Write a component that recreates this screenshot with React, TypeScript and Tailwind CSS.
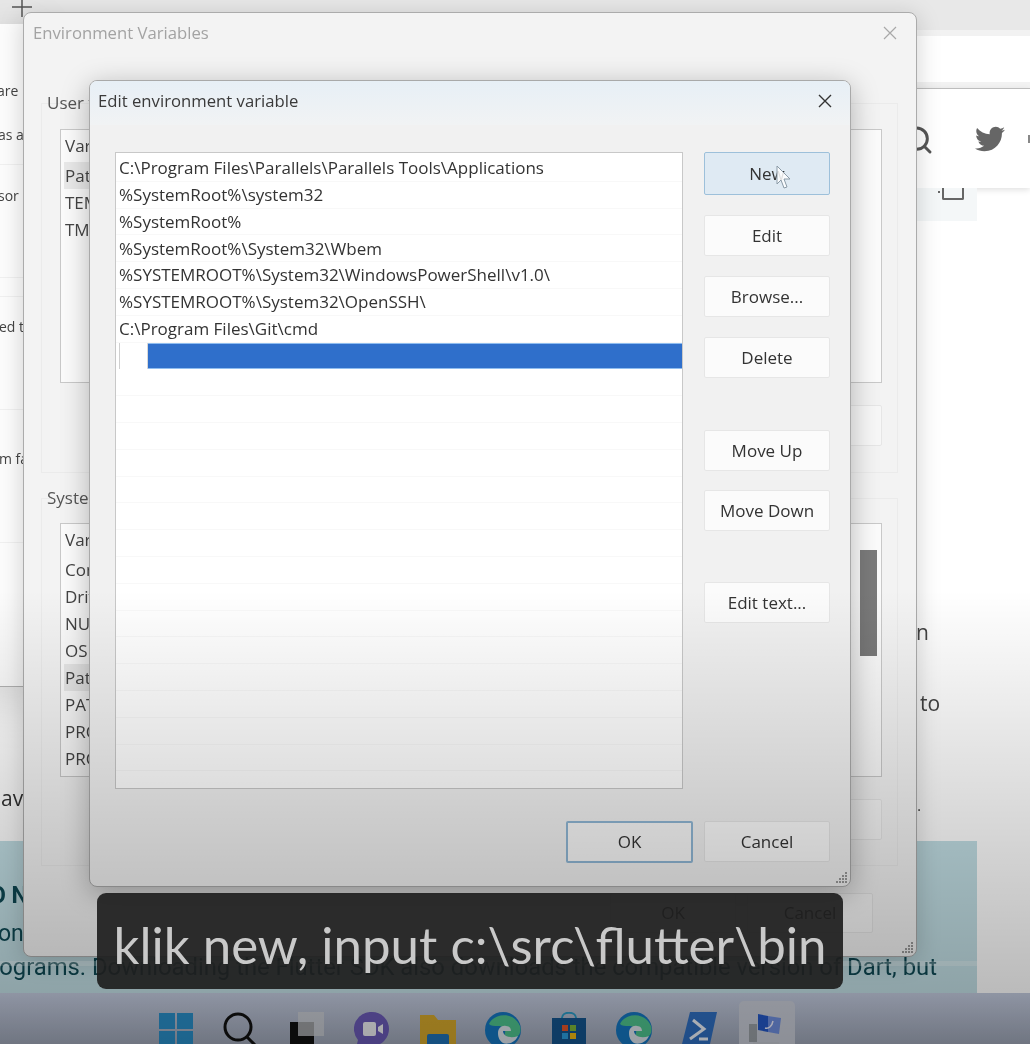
import { Search } from "lucide-react";
import { FaTwitter } from "react-icons/fa";

const paths = [
  "C:\\Program Files\\Parallels\\Parallels Tools\\Applications",
  "%SystemRoot%\\system32",
  "%SystemRoot%",
  "%SystemRoot%\\System32\\Wbem",
  "%SYSTEMROOT%\\System32\\WindowsPowerShell\\v1.0\\",
  "%SYSTEMROOT%\\System32\\OpenSSH\\",
  "C:\\Program Files\\Git\\cmd",
];

const emptyRows = Array.from({ length: 15 }, (_, i) => i);

function Btn({ children, className = "" }: { children: React.ReactNode; className?: string }) {
  return (
    <div
      className={`w-[126px] h-[41px] flex items-center justify-center text-[17px] text-[#333] bg-[#fbfbfb] border border-[#e6e6e6] rounded-[2px] shrink-0 ${className}`}
    >
      {children}
    </div>
  );
}

function VarList({ rows, selected, h, thumb }: { rows: string[]; selected: number; h: string; thumb?: boolean }) {
  return (
    <div className={`relative ml-[18px] w-[822px] ${h} bg-[#fbfbfb] border border-[#c9c9c9] overflow-hidden text-[17px] text-[#444]`}>
      <div className="h-[32px] pl-[4px] flex items-center">Variable</div>
      {rows.map((r, i) => (
        <div
          key={i}
          className={`h-[27px] w-[300px] ml-[3px] pl-[1px] flex items-center ${i === selected ? "bg-[#e9e9e9]" : ""}`}
        >
          {r}
        </div>
      ))}
      {thumb && <div className="absolute right-[4px] top-[26px] w-[17px] h-[106px] bg-[#7b7b7b]" />}
    </div>
  );
}

function Taskbar() {
  return (
    <div className="h-[51px] shrink-0 overflow-hidden flex pl-[143px] pt-[19px] bg-[linear-gradient(180deg,#c3cbdf_0%,#a0a8b9_100%)] relative">
      <div className="absolute left-[739px] top-[8px] w-[56px] h-[50px] rounded-[5px] bg-[#c9cdd8]" />
      {[
        <svg width="36" height="36" viewBox="0 0 36 36"><path fill="#2a8fc9" d="M1 1h16v16H1zM19 1h16v16H19zM1 19h16v16H1zM19 19h16v16H19z" /></svg>,
        <svg width="36" height="36" viewBox="0 0 36 36" fill="none" stroke="#111" strokeWidth="3"><circle cx="15" cy="15" r="13" /><path d="M24 25l10 10" /></svg>,
        <svg width="36" height="36" viewBox="0 0 36 36"><rect x="1" y="10" width="24" height="26" fill="#111" /><rect x="9" y="0" width="26" height="24" fill="#cfd2d6" fillOpacity="0.75" /></svg>,
        <svg width="36" height="36" viewBox="0 0 36 36"><path fill="#6b5bb8" d="M18 0a17 17 0 0 1 0 34H8l-6 2 2-8A17 17 0 0 1 18 0z" /><rect x="9" y="10" width="13" height="14" rx="2" fill="#f0f0f4" /><path d="M24 15l5-3v10l-5-3z" fill="#f0f0f4" /></svg>,
        <svg width="36" height="36" viewBox="0 0 36 36"><path fill="#d6a92c" d="M0 3h14l4 5h18v28H0z" /><rect x="7" y="22" width="22" height="14" rx="2" fill="#1f73b8" /></svg>,
        <svg width="36" height="36" viewBox="0 0 36 36"><circle cx="18" cy="18" r="18" fill="#1577c2" /><path fill="#4fc58f" d="M4 12C8 2 28-2 35 14c2 8-2 12-9 12-5 0-7-3-6-5 1-4-2-7-7-7-4 0-7 0-9-2z" /><path fill="#dfe6ee" d="M13 21c0-5 4-8 8-7 4 0 5 3 5 5h-8c0 5 7 8 15 5-3 7-11 9-15 7-3-2-5-5-5-10z" /></svg>,
        <svg width="36" height="36" viewBox="0 0 36 36"><path fill="none" stroke="#2a9cc7" strokeWidth="2" d="M11 6c0-7 14-7 14 0" /><path fill="#14558f" d="M1 6h34v28a2 2 0 0 1-2 2H3a2 2 0 0 1-2-2z" /><rect x="11" y="13" width="6" height="6" fill="#e8562a" /><rect x="19" y="13" width="6" height="6" fill="#7eb83a" /><rect x="11" y="21" width="6" height="6" fill="#2b9fe0" /><rect x="19" y="21" width="6" height="6" fill="#f2b90f" /></svg>,
        <svg width="36" height="36" viewBox="0 0 36 36"><circle cx="18" cy="18" r="18" fill="#1577c2" /><path fill="#4fc58f" d="M4 12C8 2 28-2 35 14c2 8-2 12-9 12-5 0-7-3-6-5 1-4-2-7-7-7-4 0-7 0-9-2z" /><path fill="#dfe6ee" d="M13 21c0-5 4-8 8-7 4 0 5 3 5 5h-8c0 5 7 8 15 5-3 7-11 9-15 7-3-2-5-5-5-10z" /></svg>,
        <svg width="36" height="36" viewBox="0 0 36 36"><path fill="#2f6fc2" d="M8 0h27l-7 32H0z" /><path fill="none" stroke="#eef3fb" strokeWidth="3" d="M11 8l11 9-14 10M17 27h9" /></svg>,
        <svg width="36" height="36" viewBox="0 0 36 36"><rect x="2" y="12" width="8" height="18" fill="#9aa0a6" /><path fill="#2458c7" d="M11 2l10 2v16l-10-2z" /><path fill="#6f8fe0" d="M21 4l13 2-2 16-11-2z" /><path fill="#c6cad2" d="M6 30h26v6H6z" /><path fill="none" stroke="#eef" strokeWidth="1.5" d="M18 16c4 1 7-2 8-7" /></svg>,
      ].map((icon, i) => (
        <div key={i} className="relative w-[65.5px] shrink-0 flex justify-center">{icon}</div>
      ))}
    </div>
  );
}

export default function App() {
  return (
    <div className="relative w-[1030px] h-[1044px] overflow-hidden bg-white blur-[0.5px] font-['Open_Sans','Noto_Sans',sans-serif]">
      {/* Browser page behind the windows */}
      <div className="w-full h-full flex flex-col">
        <div className="h-[30px] shrink-0 bg-[#e8e8e8] flex pl-[11px]">
          <svg width="22" height="22" viewBox="0 0 22 22" className="-mt-[3px]" fill="none" stroke="#555" strokeWidth="1.5"><path d="M11 0v20M1 10h20" /></svg>
        </div>
        <div className="h-[58px] shrink-0 bg-white border-y-[6px] border-[#f2f2f2]" />
        <div className="h-[100px] shrink-0 bg-white border-t border-[#bdbdbd] flex items-center justify-end shadow-[0_2px_6px_rgba(0,0,0,0.12)] relative">
          <Search size={32} strokeWidth={2.2} className="text-[#555] mr-[41px] mt-[2px]" />
          <FaTwitter size={30} className="text-[#666] mr-[23px]" />
          <div className="w-[2px] h-[8px] bg-[#888]" />
        </div>
        <div className="flex-1 relative flex flex-col min-h-0">
          <div className="ml-auto mr-[53px] w-[60px] h-[33px] bg-[#f4f7f8] flex justify-center gap-[2px] pl-[8px]">
            <div className="w-[2px] h-[2px] mt-[3px] bg-[#666]" />
            <div className="w-[22px] h-[12px] border-2 border-t-0 border-[#666] rounded-b-[2px]" />
          </div>
          <div className="h-[397px] shrink-0" />
          <div className="flex justify-end pr-[100px] h-[30px] text-[21px] text-[#444] items-center">
            <span className="w-[14px]">n</span>
          </div>
          <div className="h-[41px] shrink-0" />
          <div className="flex justify-end pr-[86px] h-[30px] text-[21px] text-[#444] items-center">
            <span className="w-[24px]">to</span>
          </div>
          <div className="h-[90px] shrink-0 flex items-end text-[21px] text-[#333] leading-none pl-[1px]">av</div>
          <div className="h-[10px] shrink-0 flex justify-end pr-[109px] text-[#333] text-[14px]">
            <span className="-mt-[14px]">.</span>
          </div>
          <div className="w-[977px] h-[152px] mt-auto bg-[#c2dfe5] overflow-hidden font-['Roboto',sans-serif] text-[#0f4a55]">
            <div className="h-[52px] -ml-[10px] pt-[43px] text-[23px] font-bold leading-none">O N</div>
            <div className="h-[36px] -ml-[2px] pt-[29px] text-[23px] leading-none">on</div>
            <div className="pt-[27px] -ml-[22px] text-[23.8px] leading-none whitespace-nowrap">
              programs. Downloading the Flutter SDK also downloads the compatible version of Dart, but
            </div>
          </div>
        </div>
        <Taskbar />
      </div>

      {/* Window at the far left */}
      <div className="absolute left-0 top-[24px] w-[23px] h-[663px] bg-[#fcfcfc] border-b border-[#b5b5b5] overflow-hidden shadow-[0_12px_50px_rgba(0,0,0,0.35)] flex flex-col text-[14px] leading-[20px] text-[#444] whitespace-nowrap">
        <div className="h-[77px] shrink-0 flex items-end -ml-[3px]">are</div>
        <div className="h-[24px] shrink-0" />
        <div className="h-[40px] shrink-0 -ml-[2px] border-b border-[#f0f0f0]">as a</div>
        <div className="h-[40px] shrink-0 pt-[21px] -ml-[2px]">sor :</div>
        <div className="h-[73px] shrink-0 border-b border-[#f0f0f0]" />
        <div className="h-[19px] shrink-0 border-b border-[#f0f0f0]" />
        <div className="h-[40px] shrink-0 pt-[20px] -ml-[1px]">ed t</div>
        <div className="h-[73px] shrink-0 border-b border-[#f0f0f0]" />
        <div className="h-[133px] shrink-0 pt-[39px] -ml-[1px] border-b border-[#f0f0f0]">m fa</div>
      </div>

      {/* Environment Variables window */}
      <div className="absolute left-[23px] top-[12px] w-[894px] h-[945px] rounded-[8px] bg-[#f3f3f3] border border-[#ababab] shadow-[0_4px_24px_rgba(0,0,0,0.18)] flex flex-col text-[#555]">
        <div className="h-[40px] shrink-0 pl-[9px] pr-[19px] flex items-center justify-between text-[16.7px] text-[#a3a3a3]">
          <span>Environment Variables</span>
          <svg width="14" height="14" viewBox="0 0 14 14" stroke="#a8a8a8" strokeWidth="1.2"><path d="M1 1l12 12M13 1L1 13" /></svg>
        </div>
        <div className="mt-[50px] ml-[17px] w-[857px] h-[370px] shrink-0 border border-[#ebebeb]">
          <div className="-mt-[13px] ml-[5px] h-[38px] text-[17px] text-[#555] leading-[24px]">User variables</div>
          <VarList rows={["Path", "TEMP", "TMP"]} selected={0} h="h-[254px]" />
          <div className="ml-[19px] w-[821px] mt-[22px] flex justify-end">
            <Btn className="!bg-[#f7f7f7]">Delete</Btn>
          </div>
        </div>
        <div className="mt-[25px] ml-[17px] w-[857px] h-[368px] shrink-0 border border-[#ebebeb]">
          <div className="-mt-[13px] ml-[5px] h-[37px] text-[17px] text-[#555] leading-[24px]">System variables</div>
          <VarList
            rows={["ComSpec", "DriverData", "NUMBER_OF_PROCESSORS", "OS", "Path", "PATHEXT", "PROCESSOR_ARCHITECTURE", "PROCESSOR_IDENTIFIER"]}
            selected={4}
            h="h-[254px]"
            thumb
          />
          <div className="ml-[19px] w-[821px] mt-[22px] flex justify-end">
            <Btn className="!bg-[#f7f7f7]">Delete</Btn>
          </div>
        </div>
        <div className="mt-[27px] pr-[43px] flex justify-end gap-[11px]">
          <Btn className="!bg-[#f7f7f7] !h-[40px]">OK</Btn>
          <Btn className="!bg-[#f7f7f7] !h-[40px]">Cancel</Btn>
        </div>
      </div>

      {/* Edit environment variable dialog */}
      <div className="absolute left-[89px] top-[80px] w-[762px] h-[807px] rounded-[8px] bg-[#f1f1f1] border border-[#a9a9a9] shadow-[0_6px_28px_rgba(0,0,0,0.28)] flex flex-col text-[#333] overflow-hidden">
        <div className="h-[44px] shrink-0 pl-[8px] pr-[18px] pb-[4px] flex items-center justify-between text-[16.7px] bg-[linear-gradient(180deg,#e7eff6_0%,#f1f3f4_100%)]">
          <span className="text-[#3a3a3a]">Edit environment variable</span>
          <svg width="14" height="14" viewBox="0 0 14 14" stroke="#333" strokeWidth="1.4"><path d="M1 1l12 12M13 1L1 13" /></svg>
        </div>
        <div className="flex gap-[21px] pl-[25px] pt-[27px]">
          <div className="w-[568px] h-[637px] bg-white border border-[#c8c8c8] pt-[2px] overflow-hidden text-[17px]">
            {paths.map((p) => (
              <div key={p} className="h-[26.8px] pl-[3px] flex items-center border-b border-[#f8f8f8] whitespace-nowrap">{p}</div>
            ))}
            <div className="h-[26.8px] flex bg-[#2f6fcb] border-y border-[#8fbdf0]">
              <div className="w-[32px] pl-[3px] bg-white border-r border-[#d8d8d8] -my-[1px]">
                <div className="h-full border-l border-[#cfcfcf]" />
              </div>
            </div>
            {emptyRows.map((i) => (
              <div key={i} className="h-[26.8px] border-b border-[#f8f8f8]" />
            ))}
          </div>
          <div className="flex flex-col">
            <Btn className="!h-[43px] !bg-[#dfeaf3] !border-[#9dc0da]">New</Btn>
            <Btn className="mt-[20px]">Edit</Btn>
            <Btn className="mt-[20px]">Browse...</Btn>
            <Btn className="mt-[20px]">Delete</Btn>
            <Btn className="mt-[52px]">Move Up</Btn>
            <Btn className="mt-[19px]">Move Down</Btn>
            <Btn className="mt-[51px]">Edit text...</Btn>
          </div>
        </div>
        <div className="flex justify-end gap-[11px] pr-[20px] mt-[32px]">
          <Btn className="!w-[127px] !h-[42px] !border-2 !border-[#8fb6d4] !bg-[#f8f8f8]">OK</Btn>
          <Btn>Cancel</Btn>
        </div>
        <svg width="14" height="14" viewBox="0 0 14 14" fill="#999" className="absolute right-[2px] bottom-[2px]">
          <path d="M11 2h2v2h-2zM8 5h2v2H8zM11 5h2v2h-2zM5 8h2v2H5zM8 8h2v2H8zM11 8h2v2h-2zM2 11h2v2H2zM5 11h2v2H5zM8 11h2v2H8zM11 11h2v2h-2z" />
        </svg>
      </div>

      {/* Mouse pointer */}
      <svg width="16" height="26" viewBox="0 0 16 26" className="absolute left-[776px] top-[165px]">
        <path d="M1 1v18l4-4 3 8 3-1-3-8h6z" fill="#fff" fillOpacity="0.85" stroke="#8a9aa6" strokeWidth="1" />
      </svg>

      {/* Resize grip on the outer window */}
      <svg width="14" height="14" viewBox="0 0 14 14" fill="#999" className="absolute left-[900px] top-[940px]">
        <path d="M11 2h2v2h-2zM8 5h2v2H8zM11 5h2v2h-2zM5 8h2v2H5zM8 8h2v2H8zM11 8h2v2h-2zM2 11h2v2H2zM5 11h2v2H5zM8 11h2v2H8zM11 11h2v2h-2z" />
      </svg>

      {/* Light strip of the video frame */}
      <div className="absolute left-0 top-[961px] w-full h-[5px] bg-white/25" />

      {/* Video darkening */}
      <div className="absolute left-0 right-0 top-[590px] bottom-0 bg-[linear-gradient(180deg,rgba(0,0,0,0)_0%,rgba(0,0,0,0.3)_100%)]" />

      {/* Caption */}
      <div className="absolute left-[97px] top-[893px] w-[746px] h-[96px] rounded-[9px] bg-[rgba(30,30,30,0.92)] flex justify-center overflow-hidden">
        <span className="mt-[17px] text-[51px] leading-[70px] text-[#c9c9c9] whitespace-nowrap font-['Lato',sans-serif]">
          klik new, input c:\src\flutter\bin
        </span>
      </div>
    </div>
  );
}
